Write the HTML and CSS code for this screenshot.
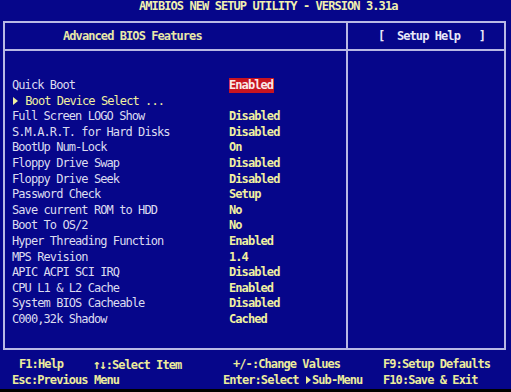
FILE: index.html
```html
<!DOCTYPE html>
<html lang="en">
<head>
  <meta charset="UTF-8"/>
  <title>AMIBIOS Setup Utility</title>
  <link rel="stylesheet" href="styles.css">
</head>
<body>

<div class="screen">
  <div class="title">AMIBIOS NEW SETUP UTILITY - VERSION 3.31a</div>

  <div class="frame">
    <div class="panel main">
      <div class="panel-head">Advanced BIOS Features</div>
      <div class="items">
        <div class="item"><span class="label">Quick Boot</span><span class="value"><span class="selected">Enabled</span></span></div>
        <div class="item sub"><span class="label"><svg class="arrow" viewBox="0 0 5 8"><polygon points="0,0 5,4 0,8" fill="#f0f0a0"/></svg> Boot Device Select ...</span><span class="value"></span></div>
        <div class="item"><span class="label">Full Screen LOGO Show</span><span class="value">Disabled</span></div>
        <div class="item"><span class="label">S.M.A.R.T. for Hard Disks</span><span class="value">Disabled</span></div>
        <div class="item"><span class="label">BootUp Num-Lock</span><span class="value">On</span></div>
        <div class="item"><span class="label">Floppy Drive Swap</span><span class="value">Disabled</span></div>
        <div class="item"><span class="label">Floppy Drive Seek</span><span class="value">Disabled</span></div>
        <div class="item"><span class="label">Password Check</span><span class="value">Setup</span></div>
        <div class="item"><span class="label">Save current ROM to HDD</span><span class="value">No</span></div>
        <div class="item"><span class="label">Boot To OS/2</span><span class="value">No</span></div>
        <div class="item"><span class="label">Hyper Threading Function</span><span class="value">Enabled</span></div>
        <div class="item"><span class="label">MPS Revision</span><span class="value">1.4</span></div>
        <div class="item"><span class="label">APIC ACPI SCI IRQ</span><span class="value">Disabled</span></div>
        <div class="item"><span class="label">CPU L1 &amp; L2 Cache</span><span class="value">Enabled</span></div>
        <div class="item"><span class="label">System BIOS Cacheable</span><span class="value">Disabled</span></div>
        <div class="item"><span class="label">C000,32k Shadow</span><span class="value">Cached</span></div>
      </div>
    </div>
    <div class="panel help">
      <div class="panel-head">[  Setup Help   ]</div>
    </div>
  </div>

  <div class="keys">
    <div class="key-line first">
      <span class="key k1">F1:Help</span>
      <span class="key k2"><span class="updown">↑↓</span>:Select Item</span>
      <span class="key k3">+/-:Change Values</span>
      <span class="key">F9:Setup Defaults</span>
    </div>
    <div class="key-line">
      <span class="key k4">Esc:Previous Menu</span>
      <span class="key k5">Enter:Select <svg class="arrow" viewBox="0 0 5 8"><polygon points="0,0 5,4 0,8" fill="#ecec9c"/></svg>Sub-Menu</span>
      <span class="key">F10:Save &amp; Exit</span>
    </div>
  </div>
</div>

</body>
</html>
```

FILE: styles.css
```css
html { background: #000; }
body {
  margin: 0; padding: 0;
  font-family: 'DejaVu Sans Mono', 'Liberation Mono', monospace;
  font-size: 12px;
  letter-spacing: -0.92px;
  color: #dcdcf0;
}
.screen {
  width: 511px; height: 389px;
  background: #06068a;
  overflow: hidden;
}
.title {
  height: 21px;
  padding-left: 139px;
  line-height: 13px;
  font-weight: bold;
  color: #f0f0b0;
}
.frame {
  display: flex;
  margin-left: 3px;
  width: 499px; height: 325px;
  border: 2px solid #b8b8e4;
}
.panel { display: flex; flex-direction: column; }
.main { width: 341px; border-right: 2px solid #b8b8e4; }
.help { flex: 1; }
.panel-head {
  height: 28px;
  box-sizing: border-box;
  padding-top: 5px;
  line-height: 16px;
  border-bottom: 2px solid #b8b8e4;
  white-space: pre;
  font-weight: bold;
}
.main .panel-head { padding-left: 58px; color: #e8e8a8; }
.help .panel-head { padding-left: 30px; color: #e8e8f8; }

.items { padding: 27px 0 0 7px; }
.item {
  display: grid;
  grid-template-columns: 217px auto;
  height: 15.6px;
  line-height: 15.6px;
}
.value { font-weight: bold; color: #f0f0a0; }
.sub .label { color: #f0f0a0; }
.arrow {
  width: 5px; height: 8px;
  vertical-align: -0.5px;
  margin: 0 1px 0 1px;
}
.selected {
  display: inline-block;
  line-height: 15px;
  padding-right: 1px;
  background: #c81420;
  color: #fbe8e8;
}

.keys { padding-top: 7px; font-weight: bold; color: #ecec9c; }
.key-line {
  display: flex;
  height: 15.5px;
  line-height: 15.5px;
  padding-left: 12px;
}
.key-line.first { padding-left: 19px; }
.key { white-space: pre; }
.updown { font-size: 13px; letter-spacing: -1.5px; }
.k1 { width: 74px; }
.k2 { width: 140px; }
.k3 { width: 150px; }
.k4 { width: 211px; }
.k5 { width: 160px; }
```
